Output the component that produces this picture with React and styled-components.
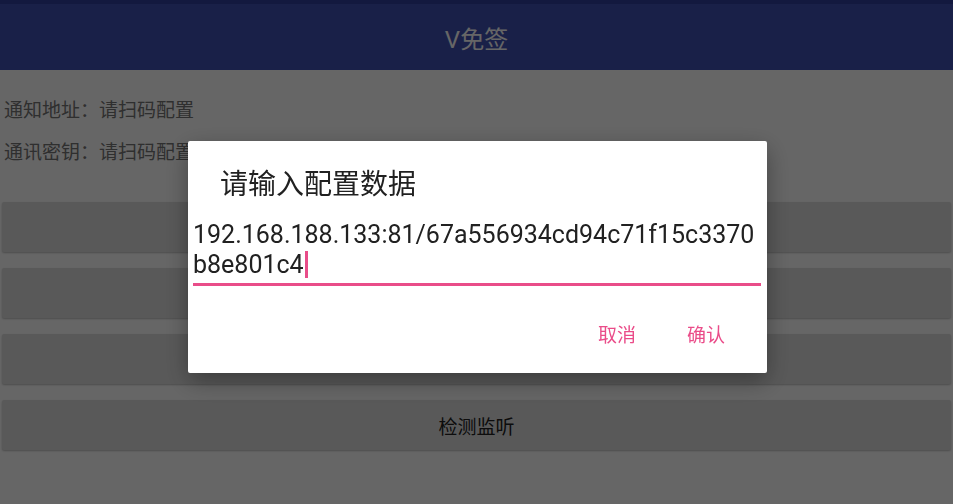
import React from "react";
import styled, { createGlobalStyle } from "styled-components";

const GlobalStyle = createGlobalStyle`
  html, body, #root {
    margin: 0;
    padding: 0;
    height: 100%;
  }
  body {
    font-family: Roboto, "Noto Sans CJK SC", sans-serif;
    background: #fff;
    overflow: hidden;
  }
`;

const Page = styled.div`
  min-height: 100vh;
  background: #fff;
  display: flex;
  flex-direction: column;
`;

const StatusBar = styled.div`
  height: 4px;
  background: #303f9f;
`;

const AppBar = styled.header`
  height: 66px;
  background: #3f51b5;
  display: flex;
  align-items: center;
  justify-content: center;
  color: #fff;
  font-size: 24px;
`;

const Content = styled.main`
  padding: 20px 2px 0;
  display: flex;
  flex-direction: column;
`;

const InfoLine = styled.div`
  padding-left: 2px;
  line-height: 42px;
  font-size: 19px;
  color: #757575;
`;

const Actions = styled.div`
  margin-top: 28px;
  display: flex;
  flex-direction: column;
  gap: 16px;
`;

const ActionButton = styled.button`
  height: 50px;
  border: none;
  border-radius: 2px;
  background: #dfdfdf;
  box-shadow: 0 1px 2px rgba(0, 0, 0, 0.25);
  font-family: Roboto, "Noto Sans CJK SC", sans-serif;
  font-size: 19px;
  color: #212121;
`;

const Scrim = styled.div`
  position: fixed;
  inset: 0;
  padding: 10px 0 0 2px;
  background: rgba(0, 0, 0, 0.6);
  display: flex;
  align-items: center;
  justify-content: center;
`;

const Dialog = styled.div`
  width: 579px;
  height: 232px;
  box-sizing: border-box;
  background: #fff;
  border-radius: 2px;
  box-shadow: 0 8px 24px rgba(0, 0, 0, 0.35);
  display: flex;
  flex-direction: column;
`;

const DialogTitle = styled.h2`
  margin: 28px 0 0 32px;
  line-height: 32px;
  font-size: 28px;
  font-weight: 400;
  color: #212121;
`;

const Field = styled.div`
  margin: 19px 6px 0 5px;
  padding-bottom: 3px;
  border-bottom: 3px solid #e94d89;
  font-size: 25px;
  line-height: 30px;
  color: #212121;
  word-break: break-all;
`;

const Caret = styled.span`
  display: inline-block;
  width: 3px;
  height: 27px;
  margin-left: 1px;
  vertical-align: -5px;
  background: #e94d89;
`;

const DialogButtons = styled.div`
  margin-top: auto;
  height: 48px;
  margin-bottom: 16px;
  padding-right: 42px;
  display: flex;
  align-items: center;
  justify-content: flex-end;
  gap: 51px;
`;

const TextButton = styled.button`
  border: none;
  background: none;
  padding: 0;
  font-family: Roboto, "Noto Sans CJK SC", sans-serif;
  font-size: 19px;
  color: #ea4c89;
`;

const ACTIONS = ["扫码配置", "手动配置", "检测心跳", "检测监听"];

export default function App() {
  return (
    <>
      <GlobalStyle />
      <Page>
        <StatusBar />
        <AppBar>V免签</AppBar>
        <Content>
          <InfoLine>通知地址：请扫码配置</InfoLine>
          <InfoLine>通讯密钥：请扫码配置</InfoLine>
          <Actions>
            {ACTIONS.map(label => (
              <ActionButton key={label}>{label}</ActionButton>
            ))}
          </Actions>
        </Content>
      </Page>
      <Scrim>
        <Dialog>
          <DialogTitle>请输入配置数据</DialogTitle>
          <Field>
            192.168.188.133:81/67a556934cd94c71f15c3370b8e801c4
            <Caret />
          </Field>
          <DialogButtons>
            <TextButton>取消</TextButton>
            <TextButton>确认</TextButton>
          </DialogButtons>
        </Dialog>
      </Scrim>
    </>
  );
}
